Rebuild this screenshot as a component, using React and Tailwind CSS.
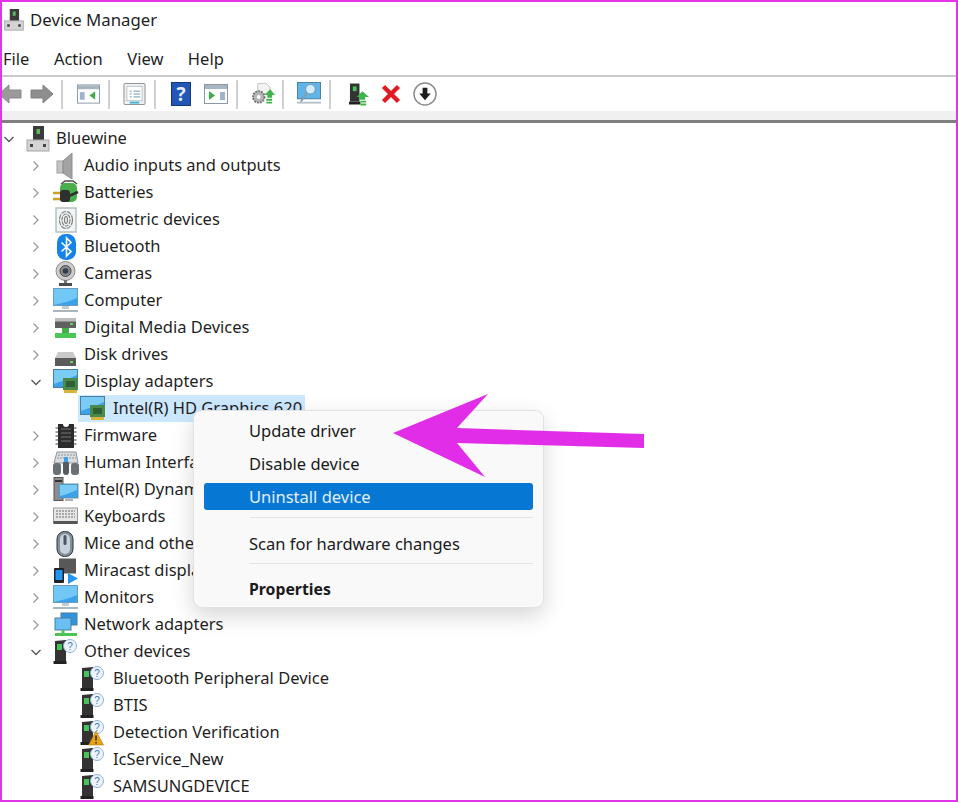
const font = { fontFamily: '"Noto Sans", sans-serif' }

function Chevron({ open }) {
  return (
    <svg width="12" height="12" viewBox="0 0 12 12" fill="none" stroke={open ? '#555' : '#999'} strokeWidth="1.3">
      {open ? <path d="M1.5 4l4.5 4.500L10.500 4" /> : <path d="M3.500 1.500L8 6l-4.500 4.500" />}
    </svg>
  )
}

function Box({ children, w = 26, h = 26 }) {
  return <svg width={w} height={h} viewBox="0 0 26 26" fill="none">{children}</svg>
}

const Pc = () => (
  <Box>
    <rect x="8" y="0" width="11" height="15" fill="#3a3a3a" />
    <rect x="11.500" y="3" width="3.500" height="5" fill="#5cb85c" />
    <rect x="2" y="14" width="22" height="11" fill="#d4d4d4" stroke="#a5a5a5" />
    <rect x="5" y="18" width="3" height="3" fill="#444" />
    <rect x="18" y="18" width="3" height="3" fill="#444" />
  </Box>
)
const Audio = () => (
  <Box>
    <rect x="4" y="8" width="6" height="12" fill="#c4c4c4" stroke="#a0a0a0" />
    <path d="M10 8l9-8v26l-9-6z" fill="#a3a3a3" stroke="#8d8d8d" />
  </Box>
)
const Battery = () => (
  <Box>
    <rect x="7" y="3" width="17" height="19" rx="5" fill="#4aae4a" />
    <path d="M8 4l4-3h8l4 3" stroke="#4d4d4d" strokeWidth="1.500" />
    <path d="M0 13h8M0 19h8" stroke="#c9a227" strokeWidth="2.500" />
    <rect x="7" y="10" width="10" height="12" rx="3" fill="#2f2f2f" />
    <path d="M16 16l9-4" stroke="#2f2f2f" strokeWidth="2.500" />
  </Box>
)
const Finger = () => (
  <Box>
    <rect x="3" y="1" width="20" height="24" fill="#f2f5f5" stroke="#b5c0c0" strokeWidth="1.500" />
    <ellipse cx="13" cy="13" rx="6.500" ry="8.500" stroke="#808080" strokeWidth="1.200" strokeDasharray="5 1" />
    <ellipse cx="13" cy="13" rx="4" ry="6" stroke="#808080" strokeWidth="1.200" strokeDasharray="4 1" />
    <ellipse cx="13" cy="13" rx="1.500" ry="3.500" stroke="#808080" strokeWidth="1.200" />
  </Box>
)
const Bt = () => (
  <Box>
    <rect x="4" y="0" width="19" height="26" rx="8.500" fill="#1683ea" />
    <path d="M8.500 8.500l9.500 9-4.500 4.500V4l4.500 4.500-9.500 9" stroke="#fff" strokeWidth="1.600" />
  </Box>
)
const Cam = () => (
  <Box>
    <circle cx="12.500" cy="10" r="9.500" fill="#cdcdcd" stroke="#8a8a8a" />
    <circle cx="12.500" cy="10" r="5.500" fill="#8a8a8a" stroke="#4a4a4a" />
    <circle cx="12.500" cy="10" r="2.800" fill="#2c3e50" />
    <path d="M12.500 19v3" stroke="#777" strokeWidth="3" />
    <rect x="6" y="22" width="13" height="3" fill="#4d4d4d" />
  </Box>
)
const Monitor = () => (
  <Box>
    <rect x="0.500" y="0.500" width="24" height="17" fill="#39a2ea" stroke="#6b9cbd" />
    <path d="M1 1h23v9C16 14 8 15 1 17z" fill="#71c8f6" />
    <rect x="9" y="18" width="7" height="3" fill="#c5ccd0" />
    <rect x="0" y="22" width="25" height="2" fill="#a9b7bd" />
  </Box>
)
const Media = () => (
  <Box>
    <rect x="2" y="4" width="21" height="9" fill="#606060" />
    <rect x="2" y="3" width="21" height="3.500" fill="#bdbdbd" />
    <rect x="17" y="8" width="3" height="2" fill="#5cd65c" />
    <rect x="9" y="13" width="7" height="6" fill="#42b04a" />
    <rect x="2" y="18" width="21" height="5" fill="#4ac657" />
  </Box>
)
const Disk = () => (
  <Box>
    <path d="M5 10h15l3 6H2z" fill="#c9c9c9" />
    <rect x="2" y="16" width="21" height="8" fill="#5a5a5a" />
    <rect x="17" y="19" width="3" height="2" fill="#5cd65c" />
  </Box>
)
const Display = () => (
  <Box>
    <rect x="0.500" y="0.500" width="24" height="18" fill="#39a2ea" stroke="#4b7d9f" />
    <path d="M1 1h23v5C16 10 8 12 1 15z" fill="#7accf5" />
    <rect x="10" y="9" width="15" height="12" fill="#4c8a4c" />
    <rect x="13" y="12" width="9" height="6" fill="#2f5f35" />
    <rect x="11" y="21" width="13" height="3" fill="#d8b43a" />
  </Box>
)
const Chip = () => (
  <Box>
    <path d="M5 1h5a3 3 0 0 0 6 0h5v24H5z" fill="#2c2c2c" />
    <path d="M5 5H2.500M5 9H2.500M5 13H2.500M5 17H2.500M5 21H2.500M21 5h2.500M21 9h2.500M21 13h2.500M21 17h2.500M21 21h2.500" stroke="#808080" strokeWidth="1.500" />
    <path d="M8 6h10M8 10h10M8 14h10M8 18h10" stroke="#777" />
  </Box>
)
const Human = () => (
  <Box>
    <path d="M4 2h19l2 11H1z" fill="#dadde0" stroke="#8a9299" />
    <path d="M5 5h17M4 8h19" stroke="#8a9299" strokeDasharray="2 1" />
    <rect x="0" y="13" width="8" height="12" rx="3" fill="#6b7076" />
    <rect x="18" y="13" width="8" height="12" rx="3" fill="#6b7076" />
    <rect x="10" y="11" width="6" height="14" rx="3" fill="#555b60" />
    <rect x="11" y="7" width="4" height="5" fill="#3ea0e8" />
  </Box>
)
const Dynamic = () => (
  <Box>
    <rect x="1" y="0.500" width="9" height="23" fill="#8d8d8d" stroke="#555" />
    <rect x="2" y="3" width="7" height="2" fill="#333" />
    <rect x="6" y="7" width="19" height="14" fill="#39a2ea" stroke="#6a8fa8" />
    <path d="M7 8h17v5C17 16 12 18 7 19z" fill="#7accf5" />
    <rect x="12" y="22" width="8" height="2" fill="#aab4b8" />
  </Box>
)
const Keyboard = () => (
  <Box>
    <rect x="0.500" y="4" width="24" height="15" fill="#e6e6e6" stroke="#9a9a9a" />
    <path d="M3 7h19M3 10h19M3 13h19" stroke="#a8a8a8" strokeWidth="2" strokeDasharray="2 1" />
    <rect x="0.500" y="17" width="24" height="3" fill="#555" />
  </Box>
)
const Mouse = () => (
  <Box>
    <rect x="4" y="0.500" width="16" height="25" rx="7.500" fill="#7f909e" stroke="#333" />
    <rect x="7" y="3" width="10" height="20" rx="5" fill="#c7d3dc" />
    <rect x="10.500" y="4" width="3" height="10" rx="1.500" fill="#4a5560" />
  </Box>
)
const Miracast = () => (
  <Box>
    <rect x="6" y="0.500" width="17" height="15" fill="#585858" />
    <rect x="1" y="10" width="10" height="15" rx="1" fill="#222" />
    <rect x="2.500" y="12" width="7" height="10" fill="#2196f3" />
    <path d="M15 15l10 5.500-10 5.500z" fill="#2196f3" />
  </Box>
)
const Network = () => (
  <Box>
    <rect x="8" y="1" width="16" height="12" fill="#2f93df" stroke="#4c7d9f" />
    <rect x="2" y="6" width="16" height="12" fill="#68c0f2" stroke="#4c7d9f" />
    <rect x="2" y="21" width="22" height="3" fill="#4cc455" />
    <path d="M10 18v3" stroke="#4cc455" strokeWidth="3" />
  </Box>
)
const Unknown = ({ warn }) => (
  <Box>
    <path d="M2 2l11 -1v22H2z" fill="#333" />
    <rect x="4" y="5" width="5" height="6" fill="#45c45a" />
    <rect x="0.500" y="22" width="13" height="3" fill="#222" />
    <circle cx="17" cy="7" r="6.500" fill="#eef4fb" stroke="#8fb2d6" />
    <text x="17" y="10.500" fontSize="10" textAnchor="middle" fill="#3f78b8" fontFamily="Liberation Sans">?</text>
    {warn ? <><path d="M16 11l7.500 14h-15z" fill="#e8a317" stroke="#9a6a00" strokeWidth="0.500" /><path d="M16 15.500v5M16 22v1.500" stroke="#222" strokeWidth="1.400" /></> : null}
  </Box>
)

const rows = [
  { level: 1, icon: <Audio />, label: 'Audio inputs and outputs' },
  { level: 1, icon: <Battery />, label: 'Batteries' },
  { level: 1, icon: <Finger />, label: 'Biometric devices' },
  { level: 1, icon: <Bt />, label: 'Bluetooth' },
  { level: 1, icon: <Cam />, label: 'Cameras' },
  { level: 1, icon: <Monitor />, label: 'Computer' },
  { level: 1, icon: <Media />, label: 'Digital Media Devices' },
  { level: 1, icon: <Disk />, label: 'Disk drives' },
  { level: 1, open: true, icon: <Display />, label: 'Display adapters' },
  { level: 2, selected: true, icon: <Display />, label: 'Intel(R) HD Graphics 620' },
  { level: 1, icon: <Chip />, label: 'Firmware' },
  { level: 1, icon: <Human />, label: 'Human Interface Devices' },
  { level: 1, icon: <Dynamic />, label: 'Intel(R) Dynamic Platform' },
  { level: 1, icon: <Keyboard />, label: 'Keyboards' },
  { level: 1, icon: <Mouse />, label: 'Mice and other pointing devices' },
  { level: 1, icon: <Miracast />, label: 'Miracast display devices' },
  { level: 1, icon: <Monitor />, label: 'Monitors' },
  { level: 1, icon: <Network />, label: 'Network adapters' },
  { level: 1, open: true, icon: <Unknown />, label: 'Other devices' },
  { level: 2, icon: <Unknown />, label: 'Bluetooth Peripheral Device' },
  { level: 2, icon: <Unknown />, label: 'BTIS' },
  { level: 2, icon: <Unknown warn />, label: 'Detection Verification' },
  { level: 2, icon: <Unknown />, label: 'IcService_New' },
  { level: 2, icon: <Unknown />, label: 'SAMSUNGDEVICE' },
]

function Row({ level, open, selected, icon, label }) {
  if (level === 2) {
    return (
      <div className="flex h-[27px] items-center pl-[76px]">
        <div className={selected ? 'flex h-[27px] items-center bg-[#cce8ff] pl-[2px] pr-[3px]' : 'flex h-[27px] items-center pl-[2px] pr-[3px]'}>
          <div className="w-[33px]">{icon}</div>
          <span>{label}</span>
        </div>
      </div>
    )
  }
  return (
    <div className="flex h-[27px] items-center">
      <div className="ml-[28px] flex w-[22px] justify-start"><Chevron open={open} /></div>
      <div className="ml-[1px] w-[31px]">{icon}</div>
      <span>{label}</span>
    </div>
  )
}

function Sep() {
  return <div className="h-[29px] w-[2px] bg-[#d0d0d0]" />
}

function Toolbar() {
  return (
    <div className="flex h-[34px] items-center">
      <svg className="ml-[-4px]" width="24" height="24" viewBox="0 0 24 24"><path d="M1 12l10-9v5h12v8H11v5z" fill="#9a9a9a" stroke="#888" /></svg>
      <svg className="ml-[8px]" width="24" height="24" viewBox="0 0 24 24"><path d="M23 12l-10-9v5H1v8h12v5z" fill="#8e8e8e" stroke="#808080" /></svg>
      <div className="ml-[7px]"><Sep /></div>
      <svg className="ml-[14px]" width="23" height="20" viewBox="0 0 24 20"><rect x="0.500" y="0.500" width="23" height="19" fill="#fff" stroke="#8b9aa6" /><rect x="1" y="1" width="22" height="4" fill="#a9b5bf" /><path d="M3 8h5v8H3z" fill="#9db4c9" /><path d="M19 7v9l-6-4.500z" fill="#3fae49" /></svg>
      <div className="ml-[8px]"><Sep /></div>
      <svg className="ml-[13px]" width="23" height="24" viewBox="0 0 24 24"><rect x="1" y="1" width="22" height="22" rx="1" fill="#f1f1f1" stroke="#8d8d8d" /><rect x="4" y="4" width="16" height="15" fill="#fff" stroke="#b7c3cc" /><path d="M7 9h2M11 9h7M7 12h2M11 12h7M7 15h2M11 15h7" stroke="#6f92ad" /><rect x="7" y="20" width="10" height="2" fill="#45b5d8" /></svg>
      <div className="ml-[8px]"><Sep /></div>
      <div className="ml-[15px] flex h-[24px] w-[20px] items-center justify-center border border-[#123a7a] bg-[#2257b5] text-[19px] font-bold leading-none text-[#e8eefb]">?</div>
      <svg className="ml-[13px]" width="24" height="20" viewBox="0 0 24 20"><rect x="0.500" y="0.500" width="23" height="19" fill="#fff" stroke="#8b9aa6" /><rect x="1" y="1" width="22" height="4" fill="#a9b5bf" /><path d="M5 7v9l6-4.500z" fill="#3fae49" /><path d="M16 8h5v8h-5z" fill="#9db4c9" /></svg>
      <div className="ml-[8px]"><Sep /></div>
      <svg className="ml-[13px]" width="24" height="25" viewBox="0 0 25 25"><path d="M7 1h9l4 4v7H7z" fill="#f2f2f2" stroke="#c5c5c5" /><circle cx="8" cy="15" r="6" fill="#b5b5b5" stroke="#777" strokeDasharray="2 1" strokeWidth="2" /><circle cx="8" cy="15" r="2" fill="#fff" /><path d="M14 13l6-6 5 6h-3v3h-5v-3z" fill="#3cb54a" /><path d="M16 18h6M16 21h6" stroke="#3cb54a" strokeWidth="2" /></svg>
      <div className="ml-[7px]"><Sep /></div>
      <svg className="ml-[13px]" width="24" height="26" viewBox="0 0 25 26"><rect x="0.500" y="1" width="24" height="17" fill="#5fb5e8" stroke="#4c7d9f" /><circle cx="14" cy="8" r="5" fill="#d2ecfa" stroke="#7896a8" /><path d="M10 12l-6 9" stroke="#8a9aa5" strokeWidth="2" /><rect x="0" y="21" width="25" height="2" fill="#b4c2c9" /></svg>
      <div className="ml-[8px]"><Sep /></div>
      <svg className="ml-[18px]" width="20" height="25" viewBox="0 0 21 25"><rect x="1" y="1" width="10" height="19" fill="#333" /><rect x="4" y="4" width="4" height="5" fill="#45c45a" /><rect x="0" y="20" width="12" height="3" fill="#222" /><path d="M8 15l6-6 7 6h-4v3H11v-3z" fill="#3cb54a" /><path d="M12 20h6M12 23h6" stroke="#3cb54a" strokeWidth="2" /></svg>
      <svg className="ml-[12px]" width="20" height="20" viewBox="0 0 20 20"><path d="M2.500 2.500l15 15M17.500 2.500l-15 15" stroke="#e01b24" strokeWidth="4.500" /></svg>
      <svg className="ml-[12px]" width="24" height="24" viewBox="0 0 25 25"><circle cx="12.500" cy="12.500" r="11.500" fill="#fff" stroke="#8a8a8a" strokeWidth="1.500" /><path d="M12.500 19l-6-7h3.500V6h5v6h3.500z" fill="#1d1d1d" /></svg>
    </div>
  )
}

function ContextMenu() {
  return (
    <div className="absolute left-[191px] top-[408px] h-[198px] w-[351px] rounded-[9px] border border-[#e2e2e2] bg-[#f9f9f9] px-[10px] pt-[3px] text-[16.500px] leading-[33px] text-[#1a1a1a] shadow-[0_8px_22px_rgba(0,0,0,0.16)]">
      <div className="h-[33px] pl-[45px]">Update driver</div>
      <div className="h-[33px] pl-[45px]">Disable device</div>
      <div className="mt-[3px] h-[27px] rounded-[3px] bg-[#0678d4] pl-[45px] text-[#e3effa] leading-[27px]">Uninstall device</div>
      <div className="ml-[46px] mt-[7px] h-px bg-[#e4e4e4]" />
      <div className="mt-[9px] h-[33px] pl-[45px]">Scan for hardware changes</div>
      <div className="ml-[46px] mt-[3px] h-px bg-[#e4e4e4]" />
      <div className="mt-[9px] h-[33px] pl-[45px] text-[15.800px] font-bold">Properties</div>
    </div>
  )
}

export default function App() {
  return (
    <div className="relative h-[802px] w-[958px] overflow-hidden border-2 border-[#e235ea] bg-white text-[16.500px] text-[#1f1f1f]" style={font}>
      <div className="flex h-[36px] items-center pl-[1px]">
        <Box w={22} h={26}><rect x="8" y="0" width="11" height="15" fill="#3a3a3a" /><rect x="11.500" y="3" width="3.500" height="5" fill="#5cb85c" /><rect x="2" y="14" width="22" height="11" fill="#d4d4d4" stroke="#a5a5a5" /><rect x="5" y="18" width="3" height="3" fill="#444" /><rect x="18" y="18" width="3" height="3" fill="#444" /></Box>
        <span className="ml-[5px] text-[16.800px]">Device Manager</span>
      </div>
      <div className="flex h-[39px] items-center gap-[24.500px] border-b-2 border-[#c9c9c9] pl-[1px] pt-[6px]">
        <span>File</span>
        <span>Action</span>
        <span>View</span>
        <span>Help</span>
      </div>
      <Toolbar />
      <div className="h-[12px] border-b-[3px] border-[#7f7f7f] bg-[#f0f0f0]" />
      <div className="pt-[2px]">
        <div className="flex h-[27px] items-center">
          <div className="w-[23px] pl-[1px]"><Chevron open /></div>
          <div className="w-[31px]"><Pc /></div>
          <span>Bluewine</span>
        </div>
        {rows.map((r) => <Row key={r.label} {...r} />)}
      </div>
      <ContextMenu />
      <svg className="absolute left-[361px] top-[390px]" width="282" height="88" viewBox="0 0 282 88">
        <path d="M30 41L125 2L94 36L281 42V56L94 51L122 85z" fill="#e22de8" />
      </svg>
    </div>
  )
}
